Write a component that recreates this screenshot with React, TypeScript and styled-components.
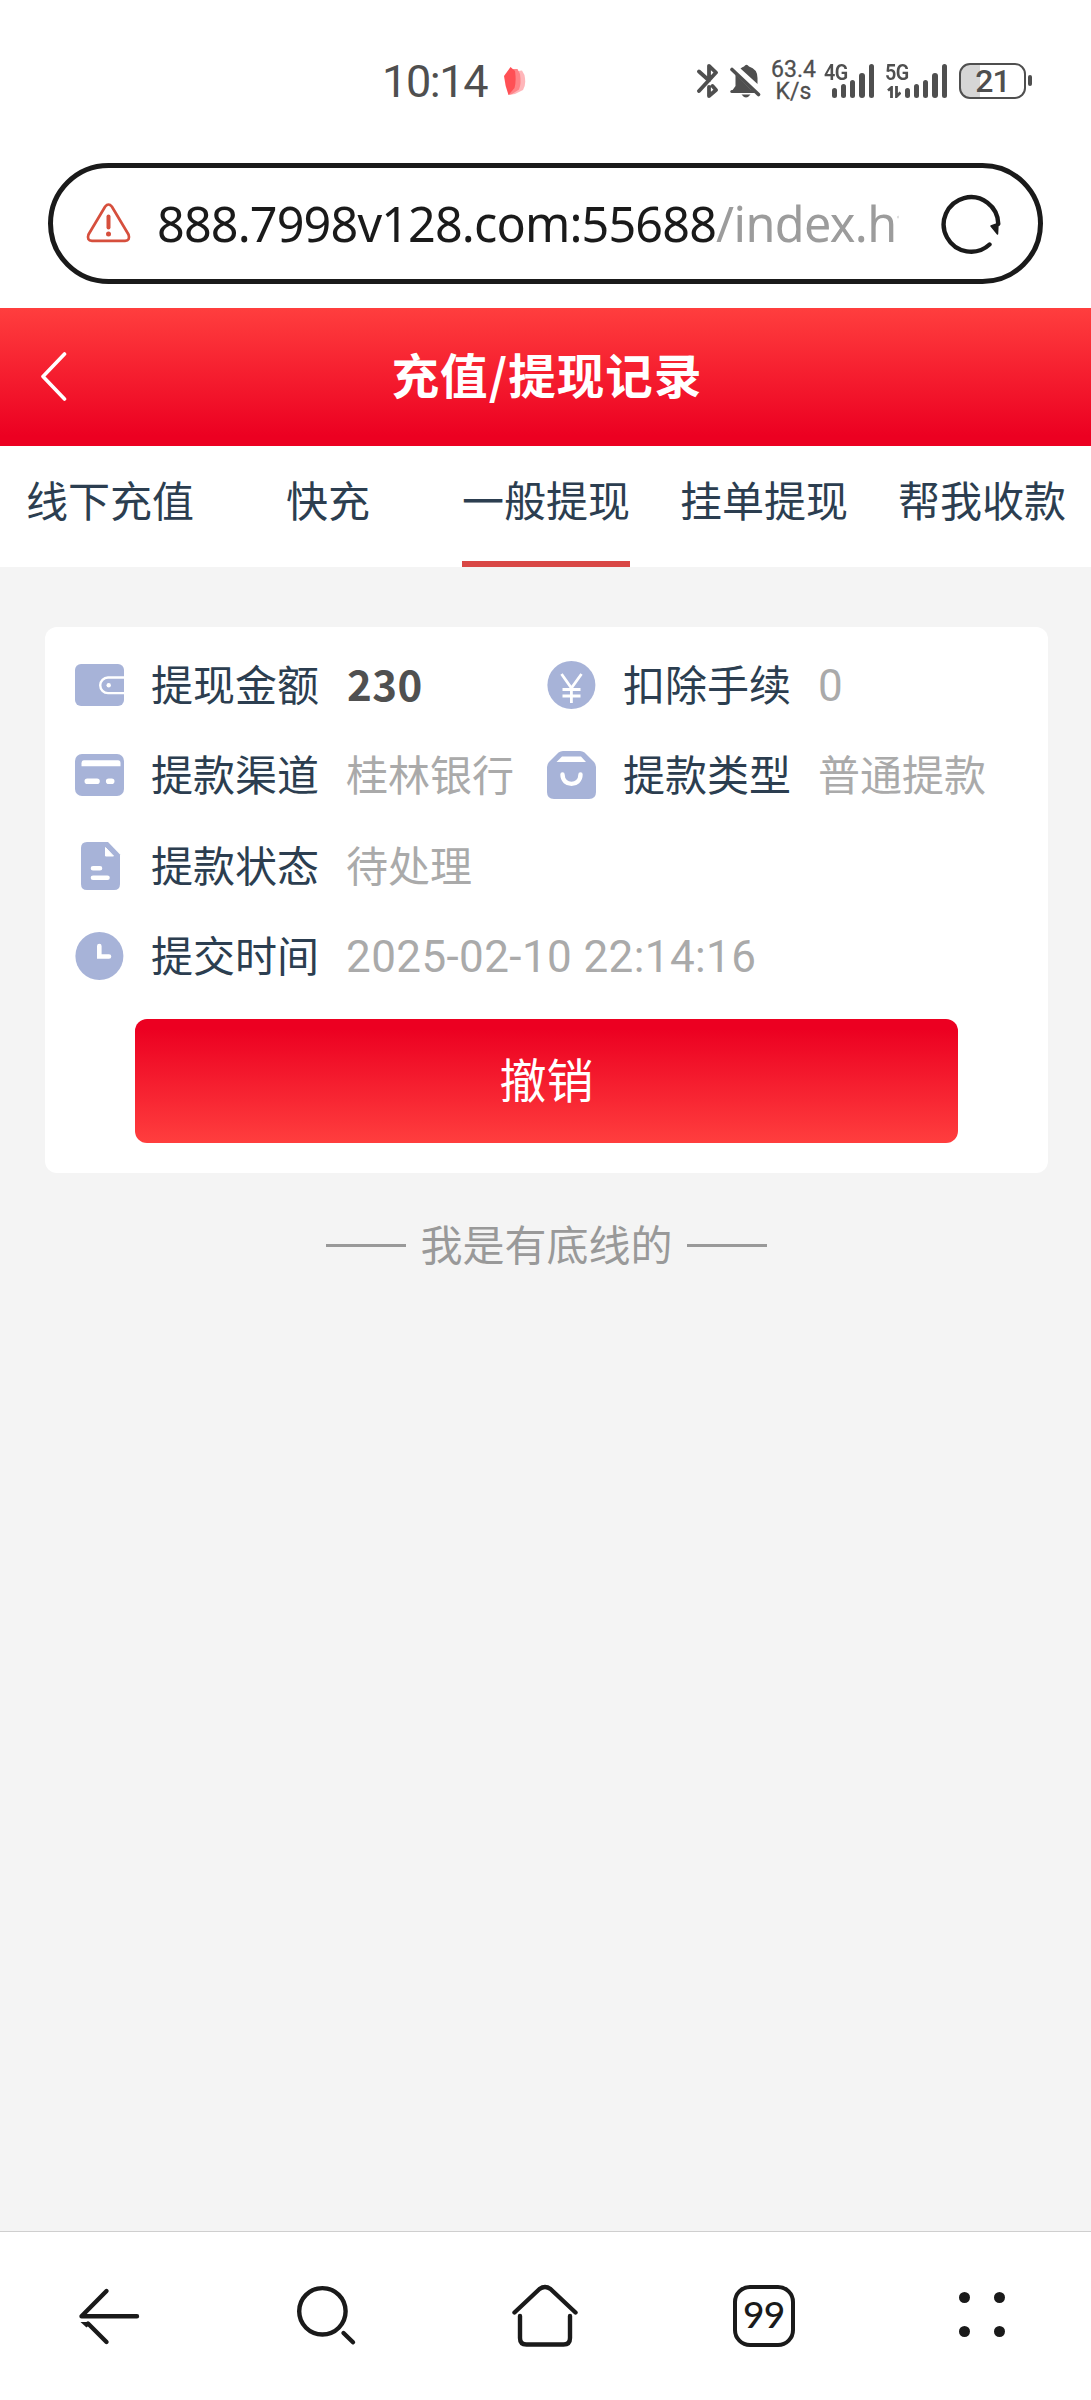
import React from 'react';
import styled, { createGlobalStyle } from 'styled-components';

const cjk = '"Noto Sans CJK SC", "Noto Sans", sans-serif';
const ink = '#1a1a1a';
const statusInk = '#4f4f4f';
const iconBlue = '#a7b3d8';

const GlobalStyle = createGlobalStyle`
  * { box-sizing: border-box; }
  body { margin: 0; background: #f4f4f4; font-family: ${cjk}; }
  svg { display: block; flex: none; }
`;

const Screen = styled.div`
  display: flex;
  flex-direction: column;
  width: 1091px;
  height: 2400px;
  background: #f4f4f4;
  overflow: hidden;
`;

/* Status bar */
const StatusBar = styled.div`
  display: flex;
  align-items: center;
  height: 163px;
  padding: 0 59px 2px 382px;
  background: #fff;
  color: ${statusInk};
`;
const Clock = styled.div`
  width: 122px;
  padding-top: 2px;
  font: 400 45px/52px Roboto, sans-serif;
  letter-spacing: -1.4px;
  white-space: nowrap;
`;
const StatusIcons = styled.div`
  display: flex;
  align-items: center;
  margin-left: auto;
`;
const BellSlot = styled.div`
  margin-left: 11px;
`;
const NetSpeed = styled.div`
  display: flex;
  flex-direction: column;
  align-items: center;
  width: 45px;
  margin: 0 8px 0 10px;
  font: 400 23px/21.5px Roboto, sans-serif;
  white-space: nowrap;
  -webkit-text-stroke: 0.3px ${statusInk};
`;
const Signal = styled.div<{ $width: number; $gap: number }>`
  display: flex;
  align-items: flex-end;
  justify-content: flex-end;
  gap: 4px;
  position: relative;
  width: ${p => p.$width}px;
  height: 34px;
  margin-right: ${p => p.$gap}px;
`;
const Generation = styled.span`
  position: absolute;
  left: 0;
  top: -3px;
  font: 600 22.5px/22px Roboto, sans-serif;
  letter-spacing: -0.5px;
  transform: scaleX(0.88);
  transform-origin: left;
`;
const Bars = styled.div`
  display: flex;
  align-items: flex-end;
  gap: 4px;
`;
const Bar = styled.i<{ $h: number }>`
  width: 5.3px;
  height: ${p => p.$h}px;
  border-radius: 3px;
  background: ${statusInk};
`;
const Battery = styled.div`
  display: flex;
  align-items: center;
  justify-content: center;
  width: 67px;
  height: 36px;
  border: 2px solid ${statusInk};
  border-radius: 11px;
  background: linear-gradient(90deg, #d6d6d6 19px, #fff 19px);
  font: 500 32px/32px Roboto, sans-serif;
  letter-spacing: -1px;
`;
const BatteryTip = styled.i`
  width: 4px;
  height: 11px;
  margin-left: 2px;
  border-radius: 2px;
  background: ${statusInk};
`;

/* Address bar */
const AddressArea = styled.div`
  height: 145px;
  padding: 0 48px;
  background: #fff;
`;
const AddressPill = styled.div`
  display: flex;
  align-items: center;
  height: 121px;
  padding: 0 37px 0 33px;
  border: 5px solid ${ink};
  border-radius: 61px;
`;
const Url = styled.div`
  width: 742px;
  margin-left: 26px;
  padding-bottom: 2px;
  overflow: hidden;
  white-space: nowrap;
  color: ${ink};
  font: 400 48.5px/70px "Noto Sans", "Open Sans", sans-serif;
  letter-spacing: -0.85px;
  mask-image: linear-gradient(90deg, #000 736px, transparent 744px);
`;
const UrlPath = styled.span`
  color: #9c9c9c;
  letter-spacing: -0.6px;
`;
const Reload = styled.div`
  margin-left: auto;
`;

/* Page header */
const Header = styled.header`
  display: grid;
  grid-template-columns: 110px 1fr 110px;
  align-items: center;
  height: 138px;
  background: linear-gradient(180deg, #ff3e3e, #ec0021 93%);
`;
const BackButton = styled.div`
  padding: 0 0 2px 38px;
`;
const Title = styled.h1`
  margin: 0;
  padding: 0 0 6px 3px;
  color: #fff;
  font: 700 47.5px/68px ${cjk};
  letter-spacing: 1.1px;
  text-align: center;
`;

const Tabs = styled.nav`
  display: grid;
  grid-template-columns: repeat(5, 1fr);
  justify-items: center;
  height: 121px;
  padding-left: 1px;
  background: #fff;
`;
const Tab = styled.div<{ $active?: boolean }>`
  height: 121px;
  border-bottom: 6px solid ${p => (p.$active ? '#d94745' : 'transparent')};
  color: #2c3e50;
  font: 400 42px/105px ${cjk};
  white-space: nowrap;
`;

/* Record card */
const Content = styled.main`
  flex: 1;
  padding: 60px 43px 0 45px;
`;
const Card = styled.section`
  height: 546px;
  padding: 13px 30px 30px;
  border-radius: 12px;
  background: #fff;
`;
const Fields = styled.div`
  display: grid;
  grid-template-columns: 472px 1fr;
  grid-auto-rows: 90.3px;
`;
const Field = styled.div<{ $wide?: boolean }>`
  display: flex;
  align-items: center;
  grid-column: ${p => (p.$wide ? '1 / -1' : 'auto')};
  font: 400 42px/60px ${cjk};
  white-space: nowrap;
`;
const Label = styled.span`
  width: 195px;
  margin-left: 27px;
  padding-bottom: 4px;
  color: #2c3e50;
`;
const Value = styled.span`
  padding-bottom: 4px;
  color: #aaa;
`;
const Amount = styled.span`
  padding: 0 0 4px 1px;
  color: #505050;
  font-weight: 700;
  letter-spacing: 0.5px;
`;
const NumberValue = styled.span`
  padding-top: 2px;
  color: #aaa;
  font: 400 44px/60px Roboto, sans-serif;
  letter-spacing: 0.4px;
`;
const CancelButton = styled.button`
  display: block;
  width: 823px;
  height: 124px;
  margin: 18px auto 0 60px;
  padding: 0 0 6px;
  border: 0;
  border-radius: 12px;
  background: linear-gradient(180deg, #ec0021 8%, #ff3e3e);
  color: #fff;
  font: 400 47px/68px ${cjk};
`;
const EndNote = styled.div`
  display: flex;
  align-items: center;
  justify-content: center;
  gap: 14px;
  margin-top: 40px;
  color: #999;
  font: 400 42px/60px ${cjk};
`;
const EndText = styled.span`
  padding-bottom: 4px;
`;
const Rule = styled.i`
  width: 80px;
  height: 3px;
  background: #999;
`;

/* Browser toolbar */
const Toolbar = styled.footer`
  display: grid;
  grid-template-columns: repeat(5, 1fr);
  justify-items: center;
  height: 169px;
  padding-top: 45px;
  border-top: 1px solid #cfcfcf;
  background: #fff;
`;
const TabCount = styled.div`
  display: flex;
  align-items: center;
  justify-content: center;
  width: 62px;
  height: 62px;
  margin-top: 8px;
  padding-bottom: 4px;
  border: 4px solid ${ink};
  border-radius: 17px;
  color: ${ink};
  font: 500 37px/40px Lato, sans-serif;
  letter-spacing: -0.8px;
`;
const Dots = styled.div`
  display: grid;
  grid-template-columns: 11px 11px;
  grid-auto-rows: 11px;
  gap: 23px 24px;
  margin-top: 15px;
`;
const Dot = styled.i`
  border-radius: 50%;
  background: ${ink};
`;

const SignalBars = () => (
  <Bars>
    {[9.7, 13.4, 17.7, 24.7, 33.4].map(h => <Bar key={h} $h={h} />)}
  </Bars>
);

const BluetoothIcon = () => (
  <svg width="22" height="36" viewBox="0 0 22 36" fill="none" stroke={statusInk} strokeWidth="3.8" strokeLinecap="round" strokeLinejoin="round">
    <path d="M2 8.5 12 17.5V2.8L19 9.5 2 28M12 24v9L19 27 15.5 23" />
  </svg>
);
const BellOffIcon = () => (
  <svg width="31" height="36" viewBox="0 0 31 36">
    <path d="M10.5 5.5Q12.5 4 14 3.5 16.5 0 19 3.5 27.5 6 27.5 15V21z" fill={statusInk} />
    <path d="M5.5 11.5 23 28.5H1.5L5.500 23z" fill={statusInk} />
    <path d="M11.5 31.5h9q-4.5 6-9 0z" fill={statusInk} />
    <path d="M2 6.5 28.5 31.5" stroke={statusInk} strokeWidth="3.6" strokeLinecap="round" />
    <path d="M1.8 28.5h22" stroke={statusInk} strokeWidth="3" strokeLinecap="round" />
  </svg>
);
const WalletIcon = () => (
  <svg width="49" height="48" viewBox="0 0 49 48">
    <rect y="3" width="49" height="42" rx="6" fill={iconBlue} />
    <path d="M49 16.5H33a7.8 7.8 0 0 0 0 15.6h16" fill="none" stroke="#fff" strokeWidth="2.4" />
    <circle cx="33.7" cy="24.2" r="2.2" fill="#fff" />
  </svg>
);
const YenIcon = () => (
  <svg width="49" height="48" viewBox="0 0 49 48">
    <circle cx="24.4" cy="24" r="24" fill={iconBlue} />
    <path d="M14.5 13 24.4 27 34.5 13M24.4 27v15M15.5 28.5h18M15.5 35h18" fill="none" stroke="#fff" strokeWidth="2.8" />
  </svg>
);
const CardIcon = () => (
  <svg width="49" height="48" viewBox="0 0 49 48">
    <rect y="3" width="49" height="42" rx="7" fill={iconBlue} />
    <path d="M9 9.3h34q2.5 0 2.5 3v3H6.5v-3q0-3 2.5-3z" fill="#fff" />
    <path d="M12.3 30.2H22M33.7 30.2h3" stroke="#fff" strokeWidth="5.6" strokeLinecap="round" />
  </svg>
);
const BagIcon = () => (
  <svg width="49" height="48" viewBox="0 0 49 48">
    <path d="M11.5 1.5Q13.5 0 16 0h17q2.5 0 4.5 1.5L46.5 10.5Q49 13 49 16v25q0 7-7 7H7q-7 0-7-7V16q0-3 2.5-5.5z" fill={iconBlue} />
    <path d="M15 5.5h19l5 5.5H9.5z" fill="#fff" />
    <path d="M15.5 23.5C15.5 36 33.5 36 33.5 23.5" fill="none" stroke="#fff" strokeWidth="4.4" strokeLinecap="round" />
  </svg>
);
const DocumentIcon = () => (
  <svg width="49" height="48" viewBox="0 0 49 48">
    <path d="M12 0h21l12 12.5V42q0 6-6 6H12q-6 0-6-6V6q0-6 6-6z" fill={iconBlue} />
    <path d="M30.5 5.5v8.5h8z" fill="#fff" stroke="#fff" strokeLinejoin="round" />
    <path d="M18 26.3h7M18 35.8h14.5" stroke="#fff" strokeWidth="4.6" strokeLinecap="round" />
  </svg>
);
const ClockIcon = () => (
  <svg width="49" height="48" viewBox="0 0 49 48">
    <circle cx="24.4" cy="24" r="24" fill={iconBlue} />
    <path d="M24.3 14v10.5H34" fill="none" stroke="#fff" strokeWidth="4.6" strokeLinecap="round" />
  </svg>
);

const tabs = ['线下充值', '快充', '一般提现', '挂单提现', '帮我收款'];

export default function App() {
  return (
    <Screen>
      <GlobalStyle />
      <StatusBar>
        <Clock>10:14</Clock>
        <svg width="22" height="30" viewBox="0 0 22 30">
          <path d="M5 29 14 5 18 4.5 20.5 9Q22.5 19 19 24L11 28z" fill="#ffb6ba" />
          <path d="M4.5 29 9 3 13.5 3 16 8Q17.5 18 15 23.5L8 28z" fill="#ff8488" />
          <path d="M0 10 6.5 1 11 5Q12.5 15 10.5 22L4.5 29Q1 20 0 10z" fill="#ff5055" />
        </svg>
        <StatusIcons>
          <BluetoothIcon />
          <BellSlot><BellOffIcon /></BellSlot>
          <NetSpeed><span>63.4</span><span>K/s</span></NetSpeed>
          <Signal $width={50} $gap={11}>
            <Generation>4G</Generation>
            <SignalBars />
          </Signal>
          <Signal $width={62} $gap={12}>
            <Generation>5G</Generation>
            <svg width="14" height="12" viewBox="0 0 14 12" fill="none" stroke={statusInk} strokeWidth="2.8">
              <path d="M1 4.5 4.5 1.5V12M9.5 0v10.5L13.5 6.5" />
            </svg>
            <SignalBars />
          </Signal>
          <Battery>21</Battery>
          <BatteryTip />
        </StatusIcons>
      </StatusBar>

      <AddressArea>
        <AddressPill>
          <svg width="45" height="42" viewBox="0 0 45 42" fill="none" stroke="#d64f3d" strokeLinecap="round" strokeLinejoin="round">
            <path d="M19.2 3.5Q22.5-.5 25.8 3.5L42.5 31.5Q44.5 37.5 39 37.8H6Q.5 37.5 2.5 31.5z" strokeWidth="2.7" />
            <path d="M22.5 13.5V24.5" strokeWidth="4" />
            <circle cx="22.5" cy="31" r="2.5" fill="#d64f3d" stroke="none" />
          </svg>
          <Url>888.7998v128.com:55688<UrlPath>/index.html</UrlPath></Url>
          <Reload>
            <svg width="60" height="60" viewBox="0 0 60 60">
              <path d="M57.3 30A27.3 27.3 0 1 0 48.5 50.5" fill="none" stroke={ink} strokeWidth="4.4" strokeLinecap="round" />
              <path d="M50 32 57 29.5 56.5 40z" fill={ink} stroke={ink} strokeWidth="1.5" strokeLinejoin="round" />
            </svg>
          </Reload>
        </AddressPill>
      </AddressArea>

      <Header>
        <BackButton>
          <svg width="30" height="50" viewBox="0 0 30 50" fill="none" stroke="#fff" strokeWidth="3.6" strokeLinecap="round" strokeLinejoin="round">
            <path d="M26.5 3 5 25.5 26.5 48" />
          </svg>
        </BackButton>
        <Title>充值/提现记录</Title>
      </Header>

      <Tabs>
        {tabs.map((name, i) => <Tab key={name} $active={i === 2}>{name}</Tab>)}
      </Tabs>

      <Content>
        <Card>
          <Fields>
            <Field><WalletIcon /><Label>提现金额</Label><Amount>230</Amount></Field>
            <Field><YenIcon /><Label>扣除手续</Label><NumberValue>0</NumberValue></Field>
            <Field><CardIcon /><Label>提款渠道</Label><Value>桂林银行</Value></Field>
            <Field><BagIcon /><Label>提款类型</Label><Value>普通提款</Value></Field>
            <Field $wide><DocumentIcon /><Label>提款状态</Label><Value>待处理</Value></Field>
            <Field $wide><ClockIcon /><Label>提交时间</Label><NumberValue>2025-02-10 22:14:16</NumberValue></Field>
          </Fields>
          <CancelButton>撤销</CancelButton>
        </Card>
        <EndNote><Rule /><EndText>我是有底线的</EndText><Rule /></EndNote>
      </Content>

      <Toolbar>
        <svg width="80" height="80" viewBox="69 2277 80 80" fill="none" stroke={ink} strokeWidth="4.4" strokeLinecap="round" strokeLinejoin="round">
          <path d="M137 2316.3H81.5L106.500 2291M106.500 2342 88 2323.500" />
          <path d="M80.500 2322H87L90 2324.500 86.500 2327.500z" fill={ink} stroke="none" />
        </svg>
        <svg width="80" height="80" viewBox="287 2277 80 80" fill="none" stroke={ink} strokeWidth="4.4" strokeLinecap="round">
          <circle cx="322.4" cy="2311.3" r="23.2" />
          <path d="M343.5 2333 353 2342.3" />
        </svg>
        <svg width="80" height="80" viewBox="505.5 2277 80 80" fill="none" stroke={ink} strokeWidth="4.4" strokeLinecap="round" strokeLinejoin="round">
          <path d="M515 2312.5 540 2289Q545.5 2285 551 2289L576 2312.5M520.5 2316V2338Q520.5 2344.5 527 2344.5H564Q570.5 2344.5 570.5 2338V2316" />
        </svg>
        <TabCount>99</TabCount>
        <Dots><Dot /><Dot /><Dot /><Dot /></Dots>
      </Toolbar>
    </Screen>
  );
}
